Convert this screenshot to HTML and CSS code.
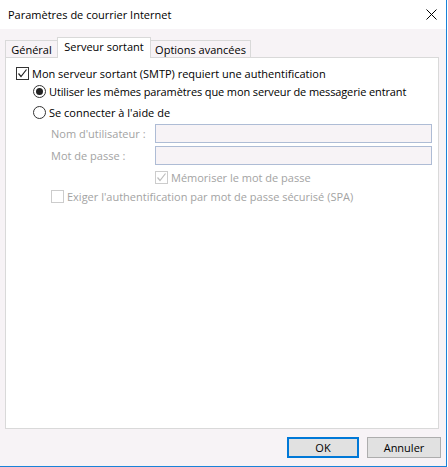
FILE: index.html
```html
<!DOCTYPE html>
<html lang="fr">
<head>
<meta charset="utf-8">
<title>Paramètres de courrier Internet</title>
<link rel="stylesheet" href="styles.css">
</head>
<body>
<div class="window">
  <div class="titlebar">
    <span class="title">Paramètres de courrier Internet</span>
    <svg class="close" width="11" height="11" viewBox="0 0 11 11"><path d="M0.5 0.5 L10.5 10.5 M10.5 0.5 L0.5 10.5" stroke="#000" stroke-width="1" fill="none"/></svg>
  </div>
  <div class="tabs">
    <div class="tab tab-general">Général</div>
    <div class="tab tab-active">Serveur sortant</div>
    <div class="tab tab-options">Options avancées</div>
  </div>
  <div class="panel">
    <div class="row row1">
      <span class="check on"><svg width="11" height="11" viewBox="0 0 11 11"><path d="M1.5 5.5 L4 8.5 L9.5 1.5" stroke="#222" stroke-width="1.2" fill="none"/></svg></span>
      <span class="lbl">Mon serveur sortant (SMTP) requiert une authentification</span>
    </div>
    <div class="row row2">
      <span class="radio sel"><span class="dot"></span></span>
      <span class="lbl">Utiliser les mêmes paramètres que mon serveur de messagerie entrant</span>
    </div>
    <div class="row row3">
      <span class="radio"></span>
      <span class="lbl">Se connecter à l'aide de</span>
    </div>
    <div class="row field row4">
      <span class="flabel">Nom d'utilisateur :</span>
      <span class="input"></span>
    </div>
    <div class="row field row5">
      <span class="flabel">Mot de passe :</span>
      <span class="input"></span>
    </div>
    <div class="row row6">
      <span class="check dis"><svg width="11" height="11" viewBox="0 0 11 11"><path d="M1.5 5.5 L4 8.5 L9.5 1.5" stroke="#bdbdbd" stroke-width="1.2" fill="none"/></svg></span>
      <span class="lbl grey">Mémoriser le mot de passe</span>
    </div>
    <div class="row row7">
      <span class="check dis"></span>
      <span class="lbl grey">Exiger l'authentification par mot de passe sécurisé (SPA)</span>
    </div>
  </div>
  <div class="footer">
    <div class="btn btn-ok">OK</div>
    <div class="btn btn-cancel">Annuler</div>
  </div>
</div>
</body>
</html>
```

FILE: styles.css
```css
html, body {
  margin: 0;
  padding: 0;
  background: #ffffff;
}
body {
  font-family: "Open Sans", "Noto Sans", sans-serif;
  font-size: 11px;
  color: #000;
}
.window {
  width: 447px;
  height: 467px;
  box-sizing: border-box;
  border-right: 1px solid #1a82d8;
  border-bottom: 1px solid #1a82d8;
  background: #f7f3f6;
  display: flex;
  flex-direction: column;
}
.titlebar {
  height: 29px;
  background: #ffffff;
  display: flex;
  align-items: center;
  justify-content: space-between;
  padding: 0 9px 0 8px;
  flex-shrink: 0;
}
.title {
  font-size: 11px;
  line-height: 16px;
  margin-top: 1px;
}
.close {
  display: block;
}
.tabs {
  display: flex;
  align-items: flex-end;
  margin-top: 8px;
  padding-left: 5px;
  height: 20px;
  position: relative;
  z-index: 1;
}
.tab {
  box-sizing: border-box;
  height: 17px;
  border: 1px solid #d9d9d9;
  border-bottom: none;
  background: #f7f3f6;
  display: flex;
  align-items: center;
  justify-content: center;
  line-height: 15px;
}
.tab-general {
  width: 52px;
  border-right: none;
}
.tab-active {
  width: 94px;
  height: 21px;
  margin-bottom: -1px;
  background: #ffffff;
  padding-bottom: 3px;
}
.tab-options {
  width: 100px;
  border-left: none;
}
.panel {
  box-sizing: border-box;
  margin-left: 5px;
  width: 434px;
  height: 372px;
  background: #ffffff;
  border: 1px solid #d9d9d9;
  padding: 6px 0 0 10px;
  flex-shrink: 0;
}
.row {
  display: flex;
  align-items: center;
  height: 18px;
}
.row2 { padding-left: 17px; }
.row3 { padding-left: 17px; margin-top: 3px; }
.field { height: 19px; margin-top: 3px; padding-left: 35px; color: #a3a3a3; }
.row6 { margin-top: 3px; padding-left: 139px; }
.row7 { margin-top: 1px; padding-left: 35px; }
.flabel {
  width: 104px;
}
.input {
  box-sizing: border-box;
  width: 277px;
  height: 19px;
  border: 1px solid #aebcd5;
  background: #f7f3f6;
}
.check {
  box-sizing: border-box;
  width: 13px;
  height: 13px;
  border: 1px solid #333;
  background: #fff;
  display: flex;
  align-items: center;
  justify-content: center;
  margin-right: 3px;
  flex-shrink: 0;
}
.check.dis {
  border-color: #cccccc;
}
.check svg { display: block; }
.radio {
  box-sizing: border-box;
  width: 13px;
  height: 13px;
  border: 1px solid #333;
  border-radius: 50%;
  background: #fff;
  display: flex;
  align-items: center;
  justify-content: center;
  margin-right: 3px;
  flex-shrink: 0;
}
.dot {
  width: 7px;
  height: 7px;
  border-radius: 50%;
  background: #222;
}
.lbl { white-space: nowrap; }
.row2 .lbl { letter-spacing: -0.12px; }
.grey { color: #a3a3a3; }
.footer {
  display: flex;
  justify-content: flex-end;
  gap: 8px;
  padding: 8px 5px 0 0;
}
.btn {
  box-sizing: border-box;
  height: 21px;
  display: flex;
  align-items: center;
  justify-content: center;
  background: #e1e1e1;
  border: 1px solid #adadad;
}
.btn-ok {
  width: 72px;
  border: 2px solid #0078d7;
}
.btn-cancel {
  width: 74px;
}
```
